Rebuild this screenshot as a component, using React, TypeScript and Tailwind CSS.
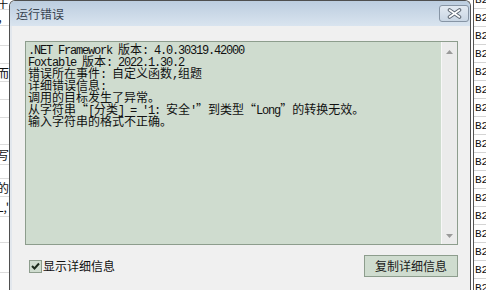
import { Fragment } from 'react';

const detailLines = [
  '.NET Framework 版本: 4.0.30319.42000',
  'Foxtable 版本: 2022.1.30.2',
  '错误所在事件: 自定义函数,组题',
  '详细错误信息:',
  '调用的目标发生了异常。',
  "从字符串“[分类] = '1: 安全'”到类型“Long”的转换无效。",
  '输入字符串的格式不正确。',
];

// rows of the sheet peeking out on the left
const leftRows = [
  { h: 10, t: '土' },
  { h: 16, t: '时，' },
  { h: 20, t: '' },
  { h: 18, t: '' },
  { h: 18, t: '而' },
  { h: 18, t: '' },
  { h: 18, t: '' },
  { h: 27, t: '' },
  { h: 20, t: '写' },
  { h: 14, t: '' },
  { h: 18, t: '的' },
  { h: 20, t: "L,'" },
  { h: 26, t: '' },
  { h: 30, t: '' },
];

const rightRows = Array.from({ length: 18 }, () => 'B2');

function MixedText({ text }: { text: string }) {
  const parts = text.split(/([\x20-\x7e]+|[“”])/).filter(Boolean);
  return (
    <>
      {parts.map((p, i) => {
        if (p === '“')
          return (
            <span key={i} className="inline-block w-[12px] text-right">
              “
            </span>
          );
        if (p === '”')
          return (
            <span key={i} className="inline-block w-[12px] text-left">
              ”
            </span>
          );
        if (/^[\x20-\x7e]+$/.test(p))
          return (
            <span key={i} className="font-['Liberation_Mono',monospace] tracking-[-1.2px]">
              {p}
            </span>
          );
        return <Fragment key={i}>{p}</Fragment>;
      })}
    </>
  );
}

function CloseIcon() {
  return (
    <svg width="15" height="11" viewBox="0 0 15 11">
      <path d="M2.5 2 L12.5 9 M12.5 2 L2.5 9" stroke="#5f6975" strokeWidth="3.6" strokeLinecap="round" />
      <path d="M2.5 2 L12.5 9 M12.5 2 L2.5 9" stroke="#ffffff" strokeWidth="1.6" strokeLinecap="round" />
    </svg>
  );
}

export default function App() {
  return (
    <div className="w-[486px] h-[290px] overflow-hidden bg-white flex font-['Noto_Sans_CJK_SC',sans-serif]">
      {/* Sheet behind, left side */}
      <div className="w-[9px] shrink-0 flex flex-col">
        {leftRows.map((r, i) => (
          <div
            key={i}
            className="flex items-center justify-end overflow-hidden whitespace-nowrap border-b border-[#dcdcdc] text-[12px] leading-[12px] text-[#111]"
            style={{ height: r.h }}
          >
            {r.t}
          </div>
        ))}
      </div>

      {/* Dialog window */}
      <div className="w-[462px] shrink-0 flex flex-col border-x border-t border-[#4f4f4f] rounded-t-[6px] overflow-hidden">
        {/* Title bar */}
        <div className="h-[25px] shrink-0 flex items-center justify-between pl-[6px] pr-[1px] bg-gradient-to-b from-[#bccddf] to-[#d9e4ef]">
          <span className="text-[12px] leading-[12px] text-[#394451]">运行错误</span>
          <div className="w-[30px] h-[17px] flex items-center justify-center rounded-[3px] border border-[#8795a5] bg-gradient-to-b from-[#e3eaf2] to-[#c9d6e4]">
            <CloseIcon />
          </div>
        </div>

        {/* Body */}
        <div className="flex-1 flex flex-col bg-[#f0f0f0] border-l-2 border-[#e2e7ed] pl-[13px] pt-[15px]">
          <div className="w-[433px] h-[204px] flex border border-[#8d9d8d] bg-[#cfdccf]">
            <div className="flex-1 pl-[2px] pt-[1px] text-[12px] leading-[12px] text-[#111] whitespace-pre">
              {detailLines.map((line, i) => (
                <div key={i} className="h-[12px]">
                  <MixedText text={line} />
                </div>
              ))}
            </div>
            <div className="w-[16px] flex flex-col items-center justify-between pt-[8px] pb-[6px] bg-[#ebebeb] border-l border-[#f7f7f7]">
              <svg width="7" height="4" viewBox="0 0 7 4">
                <path d="M0 4 L3.5 0 L7 4 Z" fill="#9a9a9a" />
              </svg>
              <svg width="7" height="4" viewBox="0 0 7 4">
                <path d="M0 0 L3.5 4 L7 0 Z" fill="#9a9a9a" />
              </svg>
            </div>
          </div>

          <div className="w-[433px] mt-[10px] flex items-center justify-between pl-[4px]">
            <label className="flex items-center gap-[1px] text-[12px] leading-[12px] text-[#111]">
              <span className="w-[13px] h-[13px] flex items-center justify-center border border-[#8d9d8d] bg-[#cfdccf]">
                <svg width="9" height="8" viewBox="0 0 9 8">
                  <path d="M1 4 L3.5 6.5 L8 1.5" stroke="#1c2b1c" strokeWidth="2" fill="none" />
                </svg>
              </span>
              显示详细信息
            </label>
            <button className="w-[94px] h-[22px] border border-[#8d9d8d] bg-[#cfdccf] text-[12px] leading-[12px] text-[#1a1a1a]">
              复制详细信息
            </button>
          </div>
        </div>
      </div>

      {/* Sheet behind, right side */}
      <div className="flex-1 ml-[2px] border-l border-[#555] overflow-hidden">
        <div className="-mt-[9px] flex flex-col">
          {rightRows.map((t, i) => (
            <div
              key={i}
              className="h-[18px] pl-[1px] pt-[3px] border-b border-[#d4d4d4] whitespace-nowrap font-['Liberation_Mono',monospace] text-[11px] leading-[12px] text-[#111]"
            >
              {t}
            </div>
          ))}
        </div>
      </div>
    </div>
  );
}
